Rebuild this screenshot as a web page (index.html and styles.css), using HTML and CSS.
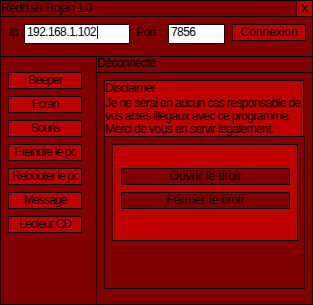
FILE: index.html
```html
<!DOCTYPE html>
<html lang="fr">
<head>
<meta charset="utf-8">
<title>Redf1sh Trojan 1.0</title>
<link rel="stylesheet" href="styles.css">
</head>
<body>
<div class="window">
  <header class="titlebar">
    <span class="title">Redf1sh Trojan 1.0</span>
    <button class="close" type="button">X</button>
  </header>
  <div class="toolbar">
    <label class="lbl lbl-ip">Ip :</label>
    <div class="field field-ip"><span>192.168.1.102</span><span class="caret"></span></div>
    <label class="lbl lbl-port">Port :</label>
    <div class="field field-port"><span>7856</span></div>
    <button class="btn btn-connect" type="button">Connexion</button>
  </div>
  <div class="main">
    <nav class="sidebar">
      <button class="btn side-btn" type="button">Beeper</button>
      <button class="btn side-btn" type="button">Ecran</button>
      <button class="btn side-btn" type="button">Souris</button>
      <button class="btn side-btn" type="button">Eteindre le pc</button>
      <button class="btn side-btn" type="button">Rebooter le pc</button>
      <button class="btn side-btn" type="button">Message</button>
      <button class="btn side-btn" type="button">Lecteur CD</button>
    </nav>
    <section class="tab">
      <div class="tab-label">Déconnecté</div>
      <div class="tab-body">
        <div class="disclaimer">
          <div class="disc-title">Disclaimer :</div>
          <p class="disc-text">Je ne serai en aucun cas responsable de<br>vos actes illégaux avec ce programme.<br>Merci de vous en servir legalement.</p>
        </div>
        <div class="frame">
          <div class="drawer">
            <button class="btn drawer-btn" type="button">Ouvrir le tiroir</button>
            <button class="btn drawer-btn" type="button">Fermer le tiroir</button>
          </div>
        </div>
      </div>
    </section>
  </div>
</div>
</body>
</html>
```

FILE: styles.css
```css
* { box-sizing: border-box; }

html, body {
  margin: 0;
  padding: 0;
  background: #800000;
}

body {
  font-family: "Liberation Sans", Arial, sans-serif;
  font-size: 12px;
  letter-spacing: -0.6px;
  line-height: 13px;
  color: #000;
}

.window {
  width: 313px;
  height: 305px;
  border: 1px solid #000;
  background: #800000;
  display: flex;
  flex-direction: column;
  overflow: hidden;
}

.titlebar {
  height: 16px;
  flex: none;
  border-bottom: 1px solid #000;
  display: flex;
  justify-content: space-between;
  align-items: stretch;
}

.title {
  padding-top: 1px;
  white-space: nowrap;
}

.close {
  width: 16px;
  height: 15px;
  margin: 0;
  padding: 0;
  border: 0;
  border-left: 1px solid #000;
  border-radius: 0;
  background: #c00000;
  color: #000;
  font: inherit;
  letter-spacing: 0;
  font-size: 13px;
  line-height: 13px;
  text-align: center;
}

.toolbar {
  height: 40px;
  flex: none;
  border-bottom: 1px solid #000;
  padding-top: 7px;
  display: flex;
  align-items: flex-start;
}

.lbl {
  margin-top: 2px;
  white-space: nowrap;
}

.lbl-ip {
  margin-left: 8px;
  width: 15px;
}

.lbl-port {
  margin-left: 6px;
  width: 32px;
}

.field {
  height: 20px;
  border: 1px solid #000;
  background: #fff;
  padding-left: 2px;
  line-height: 15px;
  white-space: nowrap;
  overflow: hidden;
}

.field-ip { width: 106px; }
.field-port { width: 57px; }

.caret {
  display: inline-block;
  width: 1px;
  height: 13px;
  background: #000;
  margin-left: 1px;
  vertical-align: -3px;
}

.btn {
  margin: 0;
  padding: 0;
  border: 1px solid #000;
  border-radius: 0;
  background: #c00000;
  color: #000;
  font: inherit;
  line-height: 15px;
  height: 17px;
  text-align: center;
  white-space: nowrap;
  overflow: hidden;
}

.btn-connect {
  width: 74px;
  margin-left: 7px;
}

.main {
  flex: 1;
  display: flex;
  min-height: 0;
}

.sidebar {
  width: 96px;
  flex: none;
  border-right: 1px solid #000;
  padding: 15px 0 0 7px;
  display: flex;
  flex-direction: column;
  gap: 7px;
}

.side-btn {
  width: 74px;
  letter-spacing: -0.85px;
}

.tab {
  flex: 1;
  display: flex;
  flex-direction: column;
}

.tab-label {
  height: 16px;
  border-bottom: 1px solid #000;
  white-space: nowrap;
}

.tab-body {
  padding: 7px 0 0 7px;
}

.disclaimer {
  width: 200px;
  height: 57px;
  border: 1px solid #000;
  background: #c00000;
  padding-top: 1px;
  overflow: hidden;
}

.disc-title {
  white-space: nowrap;
}

.disc-text {
  margin: 2px 0 0;
  white-space: nowrap;
}

.frame {
  width: 201px;
  height: 153px;
  margin-top: -1px;
  border: 1px solid #000;
  padding: 7px 0 0 7px;
}

.drawer {
  width: 186px;
  height: 97px;
  border: 1px solid #000;
  background: #c00000;
  padding: 23px 0 0 8px;
  display: flex;
  flex-direction: column;
  gap: 7px;
}

.drawer-btn {
  width: 169px;
  background: #800000;
}
```
